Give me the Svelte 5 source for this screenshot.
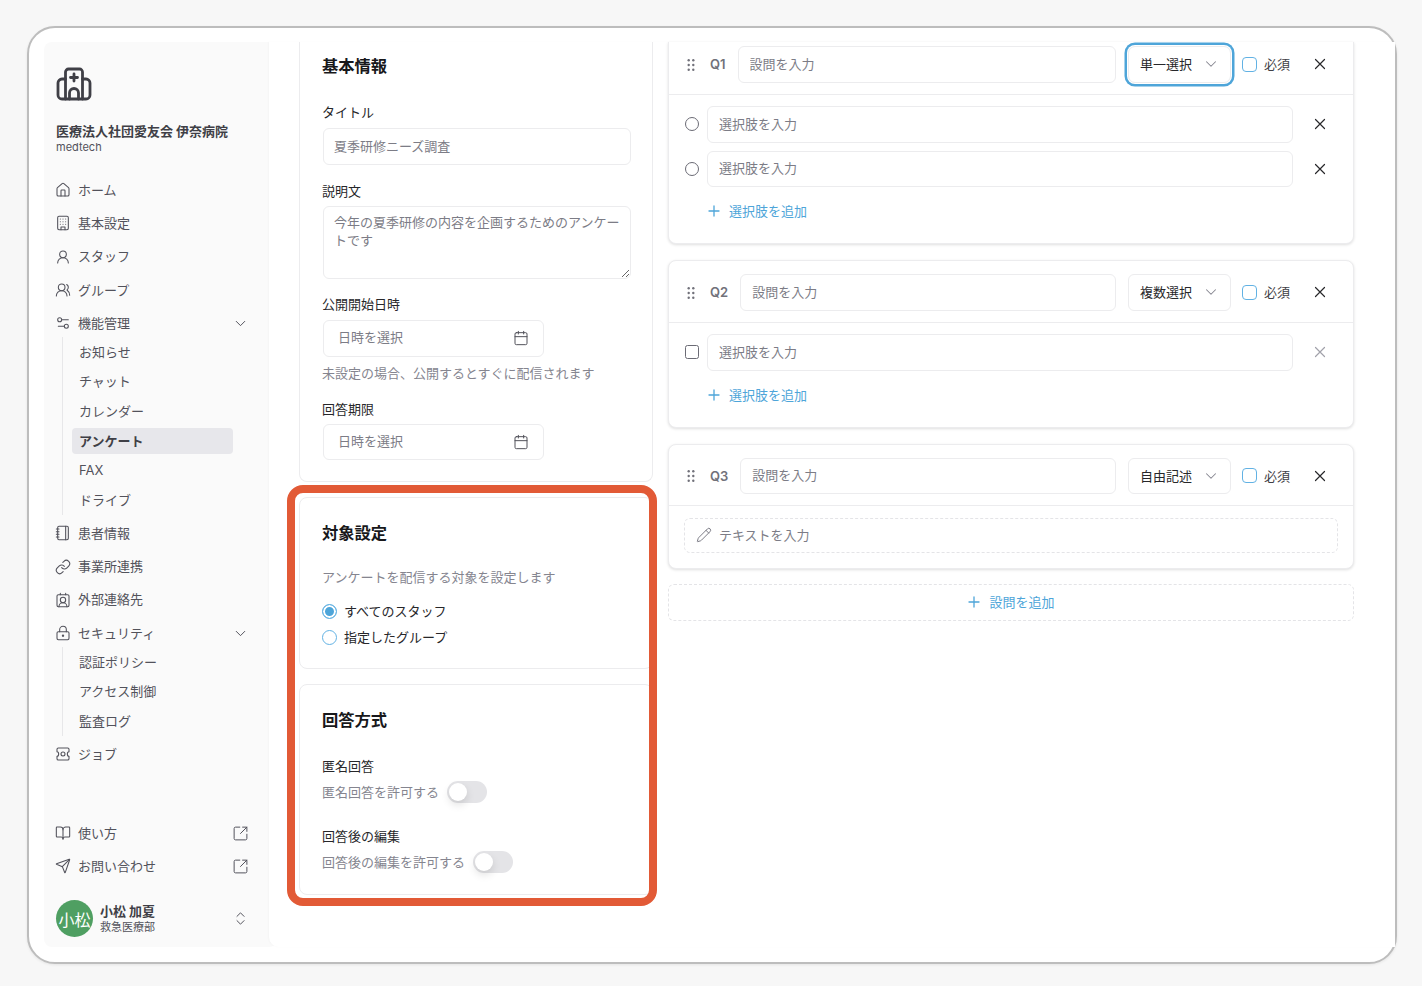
<script lang="ts">
    // lucide-style icon bodies, all on a 24 grid
    const icons: Record<string, string> = {
        home: '<path d="M15 21v-8a1 1 0 0 0-1-1h-4a1 1 0 0 0-1 1v8"/><path d="M3 10a2 2 0 0 1 .709-1.528l7-5.999a2 2 0 0 1 2.582 0l7 5.999A2 2 0 0 1 21 10v9a2 2 0 0 1-2 2H5a2 2 0 0 1-2-2z"/>',
        building: '<rect x="4" y="2" width="16" height="20" rx="2"/><path d="M9 22v-4h6v4M8 6h.01M16 6h.01M12 6h.01M12 10h.01M12 14h.01M16 10h.01M16 14h.01M8 10h.01M8 14h.01"/>',
        user: '<circle cx="12" cy="8" r="5"/><path d="M20 21a8 8 0 0 0-16 0"/>',
        users: '<path d="M18 21a8 8 0 0 0-16 0"/><circle cx="10" cy="8" r="5"/><path d="M22 20c0-3.37-2-6.5-4-8a5 5 0 0 0-.45-8.3"/>',
        settings: '<path d="M20 7h-9M14 17H5"/><circle cx="17" cy="17" r="3"/><circle cx="7" cy="7" r="3"/>',
        notebook: '<path d="M2 6h4M2 10h4M2 14h4M2 18h4M16 2v20"/><rect x="4" y="2" width="16" height="20" rx="2"/>',
        link: '<path d="M10 13a5 5 0 0 0 7.54.54l3-3a5 5 0 0 0-7.07-7.07l-1.72 1.71"/><path d="M14 11a5 5 0 0 0-7.54-.54l-3 3a5 5 0 0 0 7.07 7.07l1.71-1.71"/>',
        contact: '<path d="M16 2v2M8 2v2M17.915 22a6 6 0 0 0-12 0"/><circle cx="12" cy="12" r="4"/><rect x="3" y="4" width="18" height="18" rx="2"/>',
        lock: '<circle cx="12" cy="16" r="1"/><rect x="3" y="10" width="18" height="12" rx="2"/><path d="M7 10V7a5 5 0 0 1 10 0v3"/>',
        job: '<path d="M3 8.500V5a2 2 0 0 1 2-2h14a2 2 0 0 1 2 2v3.500c-1.500 0-2.500 1.500-2.500 3.500s1 3.500 2.500 3.500V19a2 2 0 0 1-2 2H5a2 2 0 0 1-2-2v-3.500c1.500 0 2.500-1.500 2.500-3.500S4.500 8.500 3 8.500z"/><circle cx="12" cy="12" r="3"/>',
        book: '<path d="M12 7v14"/><path d="M3 18a1 1 0 0 1-1-1V4a1 1 0 0 1 1-1h5a4 4 0 0 1 4 4 4 4 0 0 1 4-4h5a1 1 0 0 1 1 1v13a1 1 0 0 1-1 1h-6a3 3 0 0 0-3 3 3 3 0 0 0-3-3z"/>',
        send: '<path d="M14.536 21.686a.5.5 0 0 0 .937-.024l6.5-19a.496.496 0 0 0-.635-.635l-19 6.5a.5.5 0 0 0-.024.937l7.93 3.18a2 2 0 0 1 1.112 1.11z"/><path d="m21.854 2.147-10.94 10.939"/>',
        external: '<path d="M21 13v6a2 2 0 0 1-2 2H5a2 2 0 0 1-2-2V5a2 2 0 0 1 2-2h6"/><path d="m21 3-9 9M15 3h6v6"/>',
        updown: '<path d="m7 15 5 5 5-5M7 9l5-5 5 5"/>',
        calendar: '<path d="M8 2v4M16 2v4"/><rect x="3" y="4" width="18" height="18" rx="2"/><path d="M3 10h18"/>',
        chevron: '<path d="m6 9 6 6 6-6"/>',
        x: '<path d="M18 6 6 18M6 6l12 12"/>',
        pencil: '<path d="M21.174 6.812a1 1 0 0 0-3.986-3.987L3.842 16.174a2 2 0 0 0-.5.83l-1.321 4.352a.5.5 0 0 0 .623.622l4.353-1.32a2 2 0 0 0 .83-.497z"/><path d="m15 5 4 4"/>'
    };

    type NavItem = { label: string; icon: string; open?: boolean; sub?: string[] };

    const nav: NavItem[] = [
        { label: 'ホーム', icon: 'home' },
        { label: '基本設定', icon: 'building' },
        { label: 'スタッフ', icon: 'user' },
        { label: 'グループ', icon: 'users' },
        { label: '機能管理', icon: 'settings', sub: ['お知らせ', 'チャット', 'カレンダー', 'アンケート', 'FAX', 'ドライブ'] },
        { label: '患者情報', icon: 'notebook' },
        { label: '事業所連携', icon: 'link' },
        { label: '外部連絡先', icon: 'contact' },
        { label: 'セキュリティ', icon: 'lock', sub: ['認証ポリシー', 'アクセス制御', '監査ログ'] },
        { label: 'ジョブ', icon: 'job' }
    ];

    const questions = [
        { no: 'Q1', type: '単一選択', kind: 'radio', options: 2, clipped: true, focused: true },
        { no: 'Q2', type: '複数選択', kind: 'check', options: 1 },
        { no: 'Q3', type: '自由記述', kind: 'text', options: 0 }
    ];
</script>

{#snippet icon(name: string, cls = 'ico')}
    <svg class={cls} viewBox="0 0 24 24" fill="none" stroke="currentColor" stroke-linecap="round" stroke-linejoin="round">{@html icons[name]}</svg>
{/snippet}

{#snippet plus()}
    <svg class="plus" viewBox="0 0 14 14" fill="none" stroke="currentColor" stroke-width="1.3" stroke-linecap="round"><path d="M2 7h10M7 2v10" /></svg>
{/snippet}

{#snippet dateField(label: string, cls: string)}
    <div class="label {cls}">{label}</div>
    <div class="date-field">
        <input class="date-input" placeholder="日時を選択" />
        {@render icon('calendar', 'cal')}
    </div>
{/snippet}

<div class="window">
    <div class="shell">
        <aside class="sidebar">
            <svg class="logo" viewBox="0 0 36 34" fill="none" stroke="#3f3f46" stroke-width="2.800" stroke-linecap="round" stroke-linejoin="round">
                <path d="M9.500 32V5a3 3 0 0 1 3-3h11a3 3 0 0 1 3 3v27" />
                <path d="M9.500 12H6a4 4 0 0 0-4 4v12a4 4 0 0 0 4 4h24a4 4 0 0 0 4-4V16a4 4 0 0 0-4-4h-3.500" />
                <path d="M18 7v7M14.500 10.500h7" />
                <path d="M13.500 32v-6a4.500 4.500 0 0 1 9 0v6" />
            </svg>
            <div class="org">医療法人社団愛友会 伊奈病院</div>
            <div class="tenant">medtech</div>

            <nav class="nav">
                {#each nav as item}
                    <div class="nav-item">
                        {@render icon(item.icon)}
                        <span>{item.label}</span>
                        {#if item.sub}
                            {@render icon('chevron', 'ico trail')}
                        {/if}
                    </div>
                    {#if item.sub}
                        <div class="sub">
                            {#each item.sub as s}
                                <div class="sub-item" class:active={s === 'アンケート'}>{s}</div>
                            {/each}
                        </div>
                    {/if}
                {/each}
            </nav>

            <div class="foot">
                <div class="nav-item">
                    {@render icon('book')}
                    <span>使い方</span>
                    {@render icon('external', 'ico trail')}
                </div>
                <div class="nav-item">
                    {@render icon('send')}
                    <span>お問い合わせ</span>
                    {@render icon('external', 'ico trail')}
                </div>
                <div class="me">
                    <div class="avatar">小松</div>
                    <div class="me-text">
                        <div class="me-name">小松 加夏</div>
                        <div class="me-dept">救急医療部</div>
                    </div>
                    {@render icon('updown', 'ico trail')}
                </div>
            </div>
        </aside>

        <main class="main">
            <div class="col-left">
                <section class="card clipped basic">
                    <h2>基本情報</h2>
                    <div class="label title-label">タイトル</div>
                    <input class="text-input" placeholder="夏季研修ニーズ調査" />
                    <div class="label desc-label">説明文</div>
                    <textarea class="area" placeholder="今年の夏季研修の内容を企画するためのアンケートです"></textarea>
                    {@render dateField('公開開始日時', 'start-label')}
                    <div class="hint">未設定の場合、公開するとすぐに配信されます</div>
                    {@render dateField('回答期限', 'due-label')}
                </section>

                <section class="card target">
                    <h2>対象設定</h2>
                    <div class="hint target-hint">アンケートを配信する対象を設定します</div>
                    <div class="radio-row first">
                        <span class="radio on"></span>
                        <span class="radio-text">すべてのスタッフ</span>
                    </div>
                    <div class="radio-row">
                        <span class="radio"></span>
                        <span class="radio-text">指定したグループ</span>
                    </div>
                </section>

                <section class="card answer">
                    <h2>回答方式</h2>
                    <div class="label anon-label">匿名回答</div>
                    <div class="switch-row">
                        <span class="switch-text">匿名回答を許可する</span>
                        <span class="switch"><span class="thumb"></span></span>
                    </div>
                    <div class="label edit-label">回答後の編集</div>
                    <div class="switch-row">
                        <span class="switch-text">回答後の編集を許可する</span>
                        <span class="switch"><span class="thumb"></span></span>
                    </div>
                </section>

                <div class="highlight"></div>
            </div>

            <div class="col-right">
                {#each questions as q}
                    <section class="q-card" class:clipped={q.clipped}>
                        <header class="q-head">
                            <svg class="grip" viewBox="0 0 14 14" fill="currentColor">
                                <circle cx="4.700" cy="2.300" r="1.200" /><circle cx="9.300" cy="2.300" r="1.200" />
                                <circle cx="4.700" cy="7" r="1.200" /><circle cx="9.300" cy="7" r="1.200" />
                                <circle cx="4.700" cy="11.700" r="1.200" /><circle cx="9.300" cy="11.700" r="1.200" />
                            </svg>
                            <span class="q-no">{q.no}</span>
                            <input class="text-input grow" placeholder="設問を入力" />
                            <button class="select" class:focused={q.focused}>
                                <span>{q.type}</span>
                                {@render icon('chevron', 'sel-chev')}
                            </button>
                            <span class="box"></span>
                            <span class="req">必須</span>
                            <button class="del">{@render icon('x', 'x')}</button>
                        </header>
                        <div class="q-body">
                            {#if q.kind === 'text'}
                                <div class="free">
                                    {@render icon('pencil', 'pen')}
                                    <span>テキストを入力</span>
                                </div>
                            {:else}
                                {#each Array(q.options) as _, i}
                                    <div class="opt">
                                        <span class="marker {q.kind}"></span>
                                        <input class="text-input grow" placeholder="選択肢を入力" />
                                        <button class="del" class:muted={q.options === 1}>{@render icon('x', 'x')}</button>
                                    </div>
                                {/each}
                                <div class="add-opt">
                                    {@render plus()}
                                    <span>選択肢を追加</span>
                                </div>
                            {/if}
                        </div>
                    </section>
                {/each}
                <div class="add-q">
                    {@render plus()}
                    <span>設問を追加</span>
                </div>
            </div>
        </main>
    </div>
</div>

<style>
    :global(body) {
        background: #f7f7f7;
        font-family: Inter, "Noto Sans CJK JP", sans-serif;
        font-size: 13px;
        color: #27272a;
    }

    :global(#app) {
        padding: 26px 0 22px 27px;
    }

    .window {
        width: 1370px;
        height: 938px;
        box-sizing: border-box;
        background: #fff;
        border: 2px solid #bdbdbd;
        border-radius: 28px;
        padding: 14px 0 15px 15px;
        box-shadow: 0 1px 3px rgba(0, 0, 0, 0.08);
    }

    .shell {
        display: flex;
        height: 100%;
    }

    /* sidebar */
    .sidebar {
        width: 233px;
        flex: none;
        box-sizing: border-box;
        background: #fafafa;
        border-radius: 8px;
        padding: 25px 30px 10px 12px;
        display: flex;
        flex-direction: column;
        color: #52525b;
    }

    .logo {
        width: 36px;
        height: 34px;
        display: block;
    }

    .org {
        margin-top: 21px;
        font-weight: 700;
        line-height: 18px;
        color: #3f3f46;
        white-space: nowrap;
    }

    .tenant {
        font-size: 11px;
        line-height: 14px;
    }

    .nav {
        margin-top: 19.500px;
    }

    .nav-item {
        height: 33.300px;
        display: flex;
        align-items: center;
        gap: 7px;
        white-space: nowrap;
    }

    .nav-item span {
        padding-bottom: 2px;
    }

    .ico {
        width: 16px;
        height: 16px;
        flex: none;
        margin-left: -1px;
        stroke-width: 1.6;
    }

    .ico.trail {
        margin-left: auto;
        margin-right: -1.500px;
        width: 17px;
        height: 17px;
        stroke-width: 1.4;
    }

    .sub {
        margin: -2.500px -10px 1.600px 6px;
        padding-left: 9px;
        border-left: 1px solid #e7e7e9;
    }

    .sub-item {
        height: 29.600px;
        box-sizing: border-box;
        display: flex;
        align-items: center;
        position: relative;
        padding: 0 0 2px 7px;
        width: 161px;
    }

    .sub-item.active {
        font-weight: 700;
        color: #3f3f46;
        z-index: 0;
    }

    .sub-item.active::before {
        content: "";
        position: absolute;
        left: 0;
        right: 0;
        top: 1.800px;
        bottom: 1.800px;
        background: #e7e7eb;
        border-radius: 4px;
        z-index: -1;
    }

    .foot {
        margin-top: auto;
    }

    .me {
        margin-top: 17px;
        display: flex;
        align-items: center;
        gap: 7px;
    }

    .avatar {
        width: 37px;
        height: 37px;
        flex: none;
        border-radius: 50%;
        background: #4f9f62;
        color: #fff;
        font-size: 16px;
        display: flex;
        align-items: center;
        justify-content: center;
        white-space: nowrap;
    }

    .me-text {
        padding-top: 1px;
    }

    .me-name {
        font-weight: 700;
        line-height: 15px;
        font-size: 13px;
        color: #3f3f46;
        white-space: nowrap;
    }

    .me-dept {
        font-size: 11px;
        line-height: 16px;
    }

    /* main area */
    .main {
        flex: 1;
        min-width: 0;
        margin-left: -8px;
        padding-left: 30px;
        background: #fff;
        border-radius: 0 0 0 10px;
        box-shadow: -1px 0 2px rgba(0, 0, 0, 0.025);
        position: relative;
        display: flex;
        gap: 15px;
        align-items: flex-start;
    }

    .col-left {
        width: 354px;
        flex: none;
        position: relative;
        display: flex;
        flex-direction: column;
        gap: 15px;
    }

    .col-right {
        width: 686px;
        flex: none;
        display: flex;
        flex-direction: column;
        gap: 16px;
    }

    .card {
        border: 1px solid #ececee;
        border-radius: 8px;
        padding: 23px 22px 21px 23px;
    }

    .card.clipped {
        border-top: none;
        border-radius: 0 0 8px 8px;
        padding-top: 12px;
    }

    h2 {
        margin: 0;
        font-size: 16.300px;
        font-weight: 700;
        line-height: 24px;
        color: #18181b;
        margin-left: -1px;
    }

    .label {
        line-height: 17px;
        padding-bottom: 1px;
        color: #27272a;
        margin-left: -1px;
    }

    .title-label { margin-top: 26px; margin-bottom: 6px; }
    .desc-label { margin-top: 18px; margin-bottom: 5px; }
    .start-label { margin-top: 17px; margin-bottom: 6px; }
    .due-label { margin-top: 19px; margin-bottom: 5px; }
    .anon-label { margin-top: 26px; margin-bottom: 5px; }
    .edit-label { margin-top: 25px; margin-bottom: 5px; }

    input, textarea {
        font: inherit;
        color: #27272a;
        outline: none;
    }

    input::placeholder, textarea::placeholder {
        color: #7c7c86;
        opacity: 1;
    }

    .text-input {
        display: block;
        box-sizing: border-box;
        width: 308px;
        height: 36.500px;
        padding: 0 11px 1px;
        background: #fff;
        border: 1px solid #ececee;
        border-radius: 6px;
    }

    .card .text-input {
        padding-left: 10px;
    }

    .text-input.grow {
        flex: 1;
        width: auto;
        min-width: 0;
    }

    .area {
        display: block;
        box-sizing: border-box;
        width: 308px;
        height: 73.500px;
        padding: 6px 8px 6px 10px;
        line-height: 18.500px;
        border: 1px solid #ececee;
        border-radius: 6px;
    }

    .date-field {
        width: 221px;
        height: 36.500px;
        box-sizing: border-box;
        border: 1px solid #ececee;
        border-radius: 6px;
        display: flex;
        align-items: center;
        padding: 0 14px;
        color: #52525b;
    }

    .date-input {
        flex: 1;
        min-width: 0;
        border: none;
        padding: 0 0 2px;
        background: transparent;
    }

    .cal {
        width: 16px;
        height: 16px;
        flex: none;
        stroke-width: 1.500;
    }

    .hint {
        margin-top: 7px;
        margin-left: -1px;
        line-height: 18px;
        padding-bottom: 1px;
        margin-bottom: -1px;
        color: #85858f;
        white-space: nowrap;
    }

    .target {
        padding-bottom: 18px;
    }

    .target-hint {
        margin-top: 23px;
    }

    .radio-row {
        height: 26px;
        margin-left: -1px;
        display: flex;
        align-items: center;
        gap: 7px;
    }

    .radio-row.first {
        margin-top: 12px;
    }

    .radio-text {
        padding-bottom: 2px;
    }

    .radio {
        width: 15px;
        height: 15px;
        box-sizing: border-box;
        border: 1px solid #62b2e4;
        border-radius: 50%;
        flex: none;
        background: #fff;
    }

    .radio.on {
        background: #4ea5d9;
        box-shadow: inset 0 0 0 2px #fff;
    }

    .switch-row {
        height: 22px;
        margin-left: -1px;
        display: flex;
        align-items: center;
        gap: 8px;
        color: #85858f;
    }

    .switch-text {
        padding-bottom: 2px;
    }

    .switch {
        width: 40px;
        height: 22px;
        flex: none;
        border-radius: 11px;
        background: #e4e4e7;
        display: flex;
        align-items: center;
        padding-left: 2px;
        box-sizing: border-box;
    }

    .thumb {
        width: 18px;
        height: 18px;
        border-radius: 50%;
        background: #fff;
        box-shadow: 0 4px 8px rgba(0, 0, 0, 0.12);
    }

    .highlight {
        position: absolute;
        left: -12px;
        top: 443px;
        width: 370px;
        height: 421px;
        box-sizing: border-box;
        border: 8px solid #e25a36;
        border-radius: 16px;
        pointer-events: none;
    }

    /* questions */
    .q-card {
        border: 1px solid #ececee;
        border-radius: 8px;
        background: #fff;
        box-shadow: 0 1px 3px rgba(0, 0, 0, 0.13);
    }

    .q-card.clipped {
        border-top: none;
        border-radius: 0 0 8px 8px;
    }

    .q-head {
        display: flex;
        align-items: center;
        height: 36.500px;
        padding: 13px 26px 11px 15px;
        border-bottom: 1px solid #ececee;
    }

    .q-card.clipped .q-head {
        padding-top: 4px;
    }

    .grip {
        width: 14px;
        height: 14px;
        flex: none;
        margin-top: 1px;
        color: #71717a;
    }

    .q-no {
        margin: 0 12px;
        font-weight: 600;
        color: #71717a;
    }

    .select {
        width: 103px;
        height: 36.500px;
        margin: 0 11px 0 12px;
        flex: none;
        box-sizing: border-box;
        display: flex;
        align-items: center;
        justify-content: space-between;
        padding: 0 10px 0 11px;
        background: #fff;
        border: 1px solid #ececee;
        border-radius: 6px;
        font: inherit;
        color: #27272a;
    }

    .select span {
        padding-bottom: 1px;
    }

    .select.focused {
        border-radius: 7px;
        box-shadow: 0 0 0 1px #fff, 0 0 0 3.500px #4ea5d9;
    }

    .sel-chev {
        width: 18px;
        height: 18px;
        flex: none;
        color: #85858f;
        stroke-width: 1.4;
    }

    .box {
        width: 15px;
        height: 15px;
        box-sizing: border-box;
        flex: none;
        border: 1px solid #62b2e4;
        border-radius: 4px;
        margin-right: 7px;
    }

    .req {
        white-space: nowrap;
        color: #3f3f46;
        margin-right: 22px;
        padding-bottom: 1px;
    }

    .del {
        width: 15px;
        height: 15px;
        padding: 0;
        flex: none;
        border: none;
        background: none;
        color: #27272a;
        display: flex;
        align-items: center;
        justify-content: center;
    }

    .del.muted {
        color: #a1a1aa;
    }

    .x {
        width: 18px;
        height: 18px;
        flex: none;
        stroke-width: 1.6;
    }

    .q-body {
        padding: 11.500px 15px 23px;
    }

    .opt {
        display: flex;
        align-items: center;
        padding-right: 11px;
    }

    .opt + .opt {
        margin-top: 8px;
    }

    .opt .del {
        margin-left: 19px;
    }

    .marker {
        width: 14px;
        height: 14px;
        box-sizing: border-box;
        flex: none;
        margin: 0 8px 0 1px;
        border: 1.600px solid #6b6b75;
    }

    .marker.radio {
        border-radius: 50%;
        background: none;
    }

    .marker.check {
        border-radius: 2.500px;
    }

    .add-opt {
        margin: 15px 0 0 23px;
        display: flex;
        align-items: center;
        gap: 8px;
        line-height: 18px;
        color: #4ea5d9;
    }

    .plus {
        width: 14px;
        height: 14px;
        flex: none;
    }

    .free {
        height: 35px;
        box-sizing: border-box;
        margin-bottom: -8px;
        border: 1px dashed #e4e4e7;
        border-radius: 6px;
        display: flex;
        align-items: center;
        gap: 7px;
        padding-left: 11px;
        color: #7c7c86;
    }

    .free span {
        padding-bottom: 1px;
    }

    .pen {
        width: 16px;
        height: 16px;
        flex: none;
        stroke-width: 1.500;
    }

    .add-q {
        height: 37px;
        margin-top: -1px;
        box-sizing: border-box;
        border: 1px dashed #e4e4e7;
        border-radius: 6px;
        display: flex;
        align-items: center;
        justify-content: center;
        gap: 8px;
        color: #4ea5d9;
    }

    .add-q span {
        padding-bottom: 2px;
    }
</style>
